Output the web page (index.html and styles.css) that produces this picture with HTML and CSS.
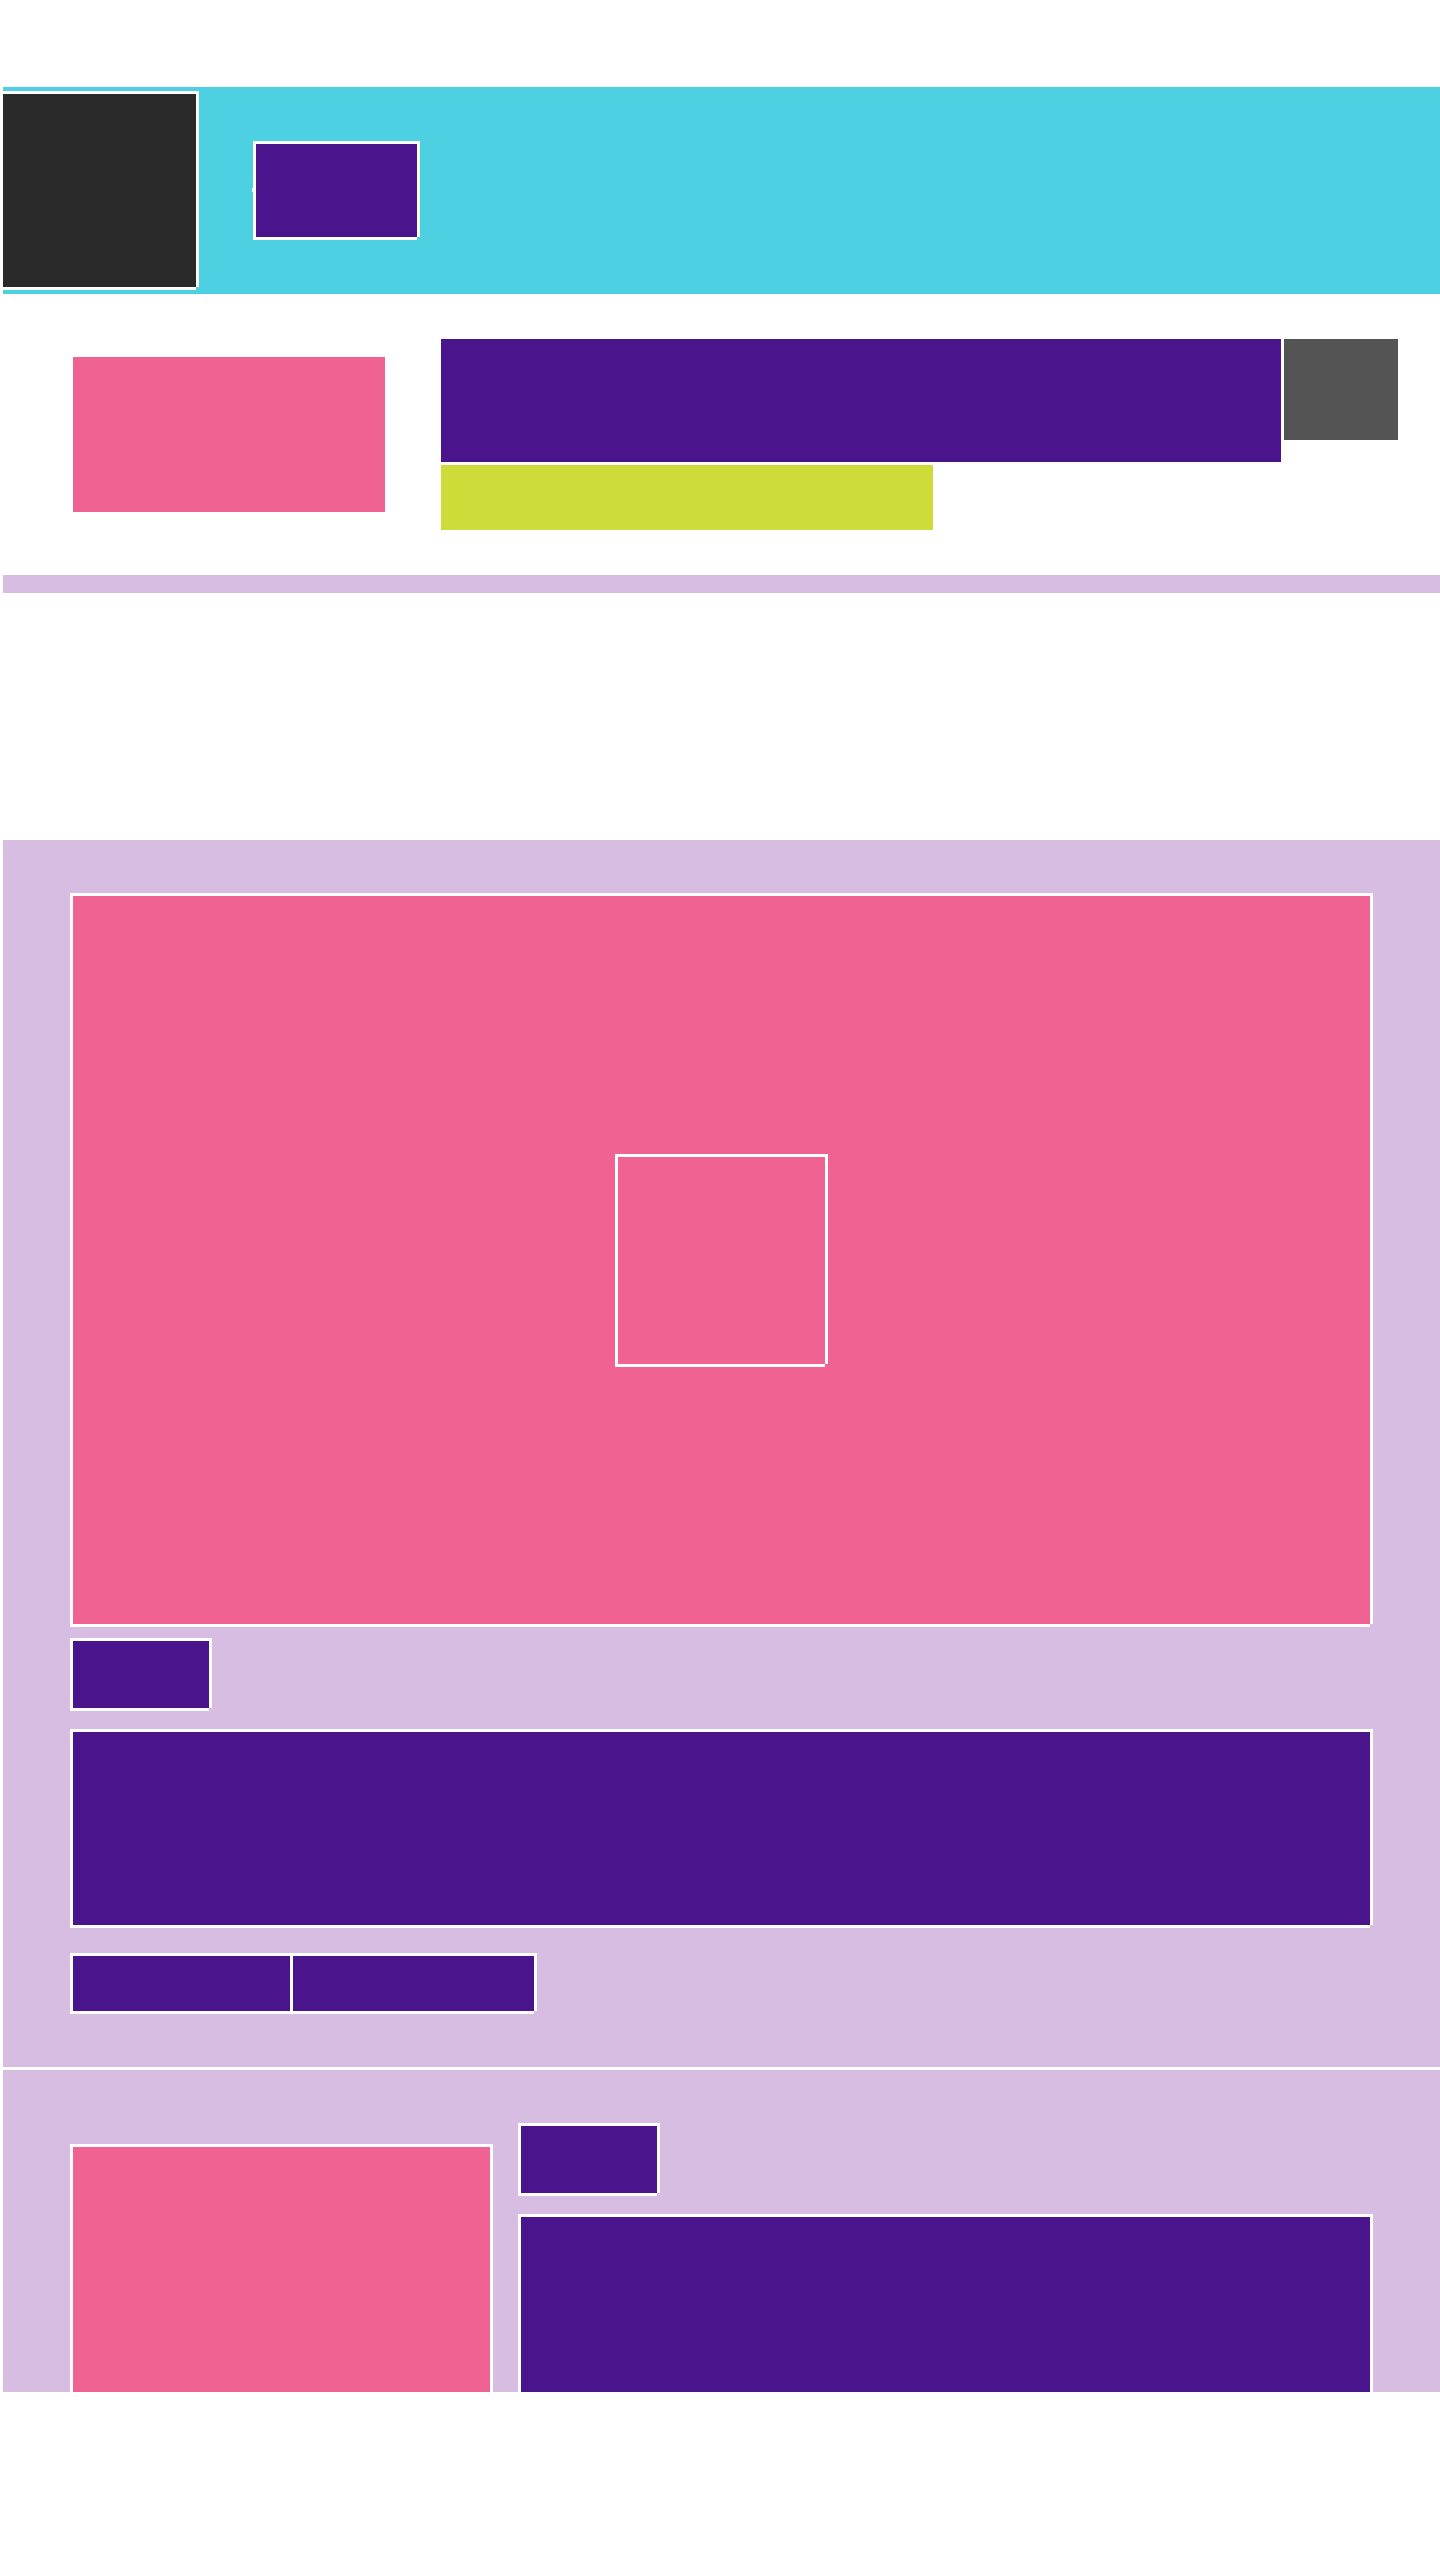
FILE: index.html
```html
<!DOCTYPE html>
<html lang="en">
<head>
<meta charset="utf-8">
<meta name="viewport" content="width=device-width, initial-scale=1">
<title>Feed</title>
<link rel="stylesheet" href="styles.css">
</head>
<body>
<div class="screen">
  <header class="toolbar">
    <div class="toolbar-icon outlined"></div>
    <div class="toolbar-title outlined"></div>
  </header>
  <section class="banner">
    <div class="banner-image"></div>
    <div class="banner-body">
      <div class="banner-row">
        <div class="banner-text"></div>
        <div class="banner-badge"></div>
      </div>
      <div class="banner-rating"></div>
    </div>
  </section>
  <div class="divider"></div>
  <main class="feed">
    <article class="card">
      <div class="hero outlined"><div class="play outlined"></div></div>
      <div class="tag outlined"></div>
      <div class="headline outlined"></div>
      <div class="meta">
        <div class="source outlined"></div>
        <div class="time outlined"></div>
      </div>
    </article>
    <article class="card card-row">
      <div class="thumb outlined"></div>
      <div class="card-body">
        <div class="tag outlined"></div>
        <div class="headline outlined"></div>
      </div>
    </article>
  </main>
</div>
</body>
</html>
```
FILE: styles.css
```css
:root {
  --cyan: #4dd0e1;
  --purple: #4a148c;
  --pink: #f06292;
  --lavender: #d7bde2;
  --lime: #cddc39;
}

* { box-sizing: border-box; }

body {
  margin: 0;
  background: #fff;
  font-family: Roboto, sans-serif;
}

.screen {
  display: flex;
  flex-direction: column;
  height: 100vh;
  padding: 87px 0 168px 3px;
}

.screen > * { flex-shrink: 0; }

/* White outline, open at the bottom right corner */
.outlined {
  box-shadow: 3px 0 #fff, 0 3px #fff, -3px 3px #fff, 3px -3px #fff, -3px -3px #fff;
}

.toolbar {
  display: flex;
  align-items: center;
  gap: 60px;
  padding: 7px 0;
  background: var(--cyan);
}

.toolbar-icon {
  width: 193px;
  height: 193px;
  background: #2a2a2a;
}

.toolbar-title {
  position: relative;
  width: 161px;
  height: 93px;
  background: var(--purple);
}

.toolbar-title::before {
  content: "";
  position: absolute;
  top: 44px;
  left: -4px;
  width: 4px;
  height: 4px;
  background: #fff;
}

.banner {
  display: flex;
  align-items: center;
  gap: 56px;
  padding: 45px 42px 45px 70px;
}

.banner-image {
  width: 312px;
  height: 155px;
  background: var(--pink);
}

.banner-body {
  flex: 1;
  display: flex;
  flex-direction: column;
  gap: 3px;
}

.banner-row {
  display: flex;
  gap: 3px;
}

.banner-text {
  flex: 1;
  height: 123px;
  background: var(--purple);
}

.banner-badge {
  width: 114px;
  height: 101px;
  background: #545454;
}

.banner-rating {
  width: 492px;
  height: 65px;
  background: var(--lime);
}

.divider {
  height: 18px;
  background: var(--lavender);
}

.screen > .feed {
  flex: 1 1 0;
  min-height: 0;
  margin-top: 247px;
  overflow: hidden;
}

.card {
  padding: 56px 70px;
  border-bottom: 3px solid #fff;
  background: var(--lavender);
}

.hero {
  display: grid;
  place-items: center;
  height: 728px;
  margin-bottom: 17px;
  background: var(--pink);
}

.play {
  width: 207px;
  height: 207px;
  background: var(--pink);
}

.tag {
  width: 136px;
  height: 67px;
  margin-bottom: 24px;
  background: var(--purple);
}

.headline {
  height: 193px;
  background: var(--purple);
}

.meta {
  display: flex;
  gap: 3px;
  margin-top: 31px;
}

.source,
.time {
  height: 55px;
  background: var(--purple);
}

.source { width: 217px; }
.time { width: 241px; }

.card-row {
  display: flex;
  gap: 31px;
}

.thumb {
  width: 417px;
  height: 417px;
  margin-top: 21px;
  background: var(--pink);
}

.card-body { flex: 1; }
```
